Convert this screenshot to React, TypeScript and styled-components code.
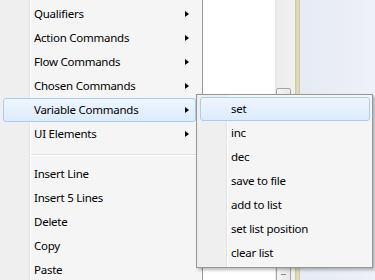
import React from 'react';
import styled, { createGlobalStyle } from 'styled-components';

const GlobalStyle = createGlobalStyle`
  html, body {
    margin: 0;
    padding: 0;
    background: #ffffff;
  }

  #root {
    width: 375px;
    height: 280px;
    overflow: hidden;
    position: relative;
  }
`;

type Item = { label: string; sub?: boolean; active?: boolean } | 'separator';

const mainItems: Item[] = [
  { label: 'Qualifiers', sub: true },
  { label: 'Action Commands', sub: true },
  { label: 'Flow Commands', sub: true },
  { label: 'Chosen Commands', sub: true },
  { label: 'Variable Commands', sub: true, active: true },
  { label: 'UI Elements', sub: true },
  'separator',
  { label: 'Insert Line' },
  { label: 'Insert 5 Lines' },
  { label: 'Delete' },
  { label: 'Copy' },
  { label: 'Paste' },
];

const variableItems: Item[] = [
  { label: 'set', active: true },
  { label: 'inc' },
  { label: 'dec' },
  { label: 'save to file' },
  { label: 'add to list' },
  { label: 'set list position' },
  { label: 'clear list' },
];

const App = () => {
  const renderItems = (items: Item[]) =>
    items.map((item, i) =>
      item === 'separator' ? (
        <Separator key={i} />
      ) : (
        <MenuItem key={i} $active={item.active}>
          <Label>{item.label}</Label>
          {item.sub && <SubArrow />}
        </MenuItem>
      ),
    );

  return (
    <>
      <GlobalStyle />
      <Screen>
        <MainMenu>{renderItems(mainItems)}</MainMenu>
        <Backdrop>
          <WhiteField />
          <ScrollTrack>
            <Thumb>
              <Grip />
            </Thumb>
          </ScrollTrack>
          <TanRule />
          <Desk />
        </Backdrop>
        <SubMenu>{renderItems(variableItems)}</SubMenu>
      </Screen>
    </>
  );
};

const Screen = styled.div`
  display: flex;
  width: 375px;
  height: 280px;
  overflow: hidden;
  font-family: 'Noto Sans', 'Open Sans', sans-serif;
  font-size: 11.5px;
  letter-spacing: -0.25px;
  color: #000;
`;

const Menu = styled.div`
  box-sizing: border-box;
  display: flex;
  flex-direction: column;
  border: 1px solid #979797;
  background: linear-gradient(
    to right,
    #efefef 0 29px,
    #e2e3e3 29px 30px,
    #ffffff 30px 31px,
    #f5f5f5 31px
  );
`;

const MainMenu = styled(Menu)`
  flex: none;
  width: 204px;
  height: 300px;
  margin: -1px 0 0 -1px;
  padding: 2px 6px 2px 3px;
  box-shadow: 1px 0 1px rgba(0, 0, 0, 0.18);
`;

const SubMenu = styled(Menu)`
  position: absolute;
  left: 196px;
  top: 94px;
  width: 177px;
  padding: 2px 2px 2px 3px;
  box-shadow: 2px 2px 3px rgba(0, 0, 0, 0.28);
`;

const MenuItem = styled.div<{ $active?: boolean }>`
  box-sizing: border-box;
  display: flex;
  align-items: center;
  height: 24px;
  padding: 0 0 1px 30px;
  border: 1px solid ${p => (p.$active ? '#a9cdf0' : 'transparent')};
  border-radius: 3px;
  background: ${p =>
    p.$active ? 'linear-gradient(to bottom, #eef6fe, #dcebfb)' : 'transparent'};
`;

const Label = styled.span`
  white-space: nowrap;
  line-height: 1;
`;

const SubArrow = styled.span`
  margin-left: auto;
  margin-right: 6px;
  width: 0;
  height: 0;
  border-top: 3.5px solid transparent;
  border-bottom: 3.5px solid transparent;
  border-left: 4px solid #000;
`;

const Separator = styled.div`
  height: 0;
  margin: 8px 0 6px 28px;
  border-top: 1px solid #e0e0e0;
  border-bottom: 1px solid #ffffff;
`;

const Backdrop = styled.div`
  flex: 1;
  display: flex;
  height: 280px;
`;

const WhiteField = styled.div`
  width: 72px;
  background: #ffffff;
`;

const ScrollTrack = styled.div`
  width: 20px;
  background: linear-gradient(to right, #e6e6e6, #eeeeee 3px, #f0f0f0);
  overflow: hidden;
`;

const Thumb = styled.div`
  box-sizing: border-box;
  display: flex;
  align-items: flex-end;
  justify-content: center;
  width: 15px;
  height: 196px;
  margin: 88px 0 0 1px;
  border: 1px solid #a5a5a5;
  border-radius: 2px;
  background: linear-gradient(to right, #f4f4f4, #e9e9e9);
`;

const Grip = styled.div`
  width: 5px;
  height: 1px;
  margin-bottom: 8px;
  background: #8a8a8a;
`;

const TanRule = styled.div`
  width: 5px;
  background: linear-gradient(to right, #cbc39f, #e4dec3 50%, #cfc7a4);
`;

const Desk = styled.div`
  flex: 1;
  background: linear-gradient(to right, #e6eaf2, #eef1f7);
`;

export default App;
